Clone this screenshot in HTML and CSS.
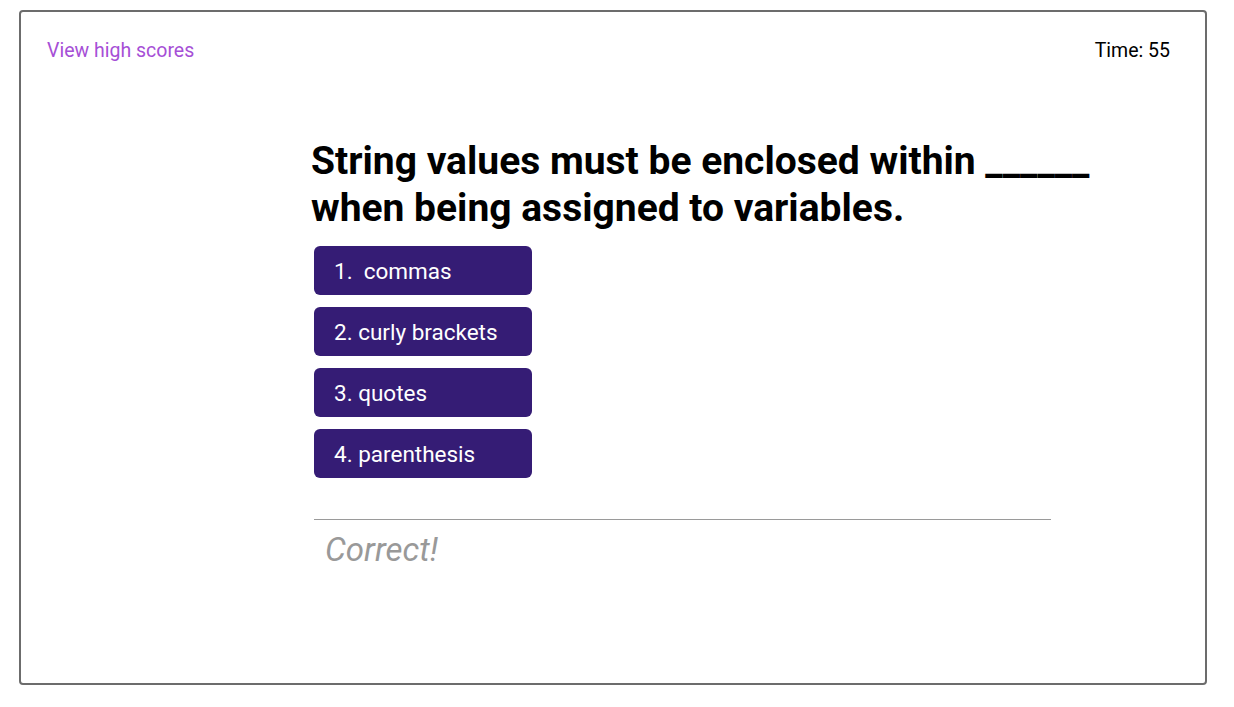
FILE: index.html
```html
<!DOCTYPE html>
<html lang="en">
<head>
<meta charset="utf-8">
<title>Code Quiz</title>
<link rel="stylesheet" href="styles.css">
</head>
<body>
<div class="frame">
  <header class="topbar">
    <a class="scores-link" href="#">View high scores</a>
    <div class="timer">Time: 55</div>
  </header>
  <main class="quiz">
    <h1 class="question">String values must be enclosed within ______ when being assigned to variables.</h1>
    <div class="choices">
      <button class="choice">1.&nbsp; commas</button>
      <button class="choice">2. curly brackets</button>
      <button class="choice">3. quotes</button>
      <button class="choice">4. parenthesis</button>
    </div>
    <div class="feedback">Correct!</div>
  </main>
</div>
</body>
</html>
```
FILE: styles.css
```css
html, body {
  margin: 0;
  padding: 0;
  background: #ffffff;
}
body {
  font-family: Roboto, "Liberation Sans", sans-serif;
  color: #000;
}
.frame {
  box-sizing: border-box;
  margin: 10px 0 0 19px;
  width: 1188px;
  height: 675px;
  border: 2px solid #6c6c6c;
  border-radius: 4px;
}
.topbar {
  display: flex;
  justify-content: space-between;
  align-items: flex-start;
  padding: 27px 35px 0 26px;
  font-size: 19.5px;
  line-height: 24px;
}
.scores-link {
  color: #a64fd6;
  text-decoration: none;
}
.timer {
  color: #000;
}
.quiz {
  padding: 0 0 0 290px;
}
.question {
  margin: 75px 0 0 0;
  width: 860px;
  font-size: 39px;
  font-weight: 700;
  line-height: 47px;
}
.choices {
  display: flex;
  flex-direction: column;
  align-items: flex-start;
  gap: 12px;
  margin: 14px 0 0 3px;
}
.choice {
  box-sizing: border-box;
  width: 218px;
  height: 49px;
  padding: 0 0 0 20px;
  border: none;
  border-radius: 6px;
  background: #351c75;
  color: #fff;
  font-family: Roboto, "Liberation Sans", sans-serif;
  font-size: 22.5px;
  text-align: left;
  cursor: pointer;
}
.feedback {
  box-sizing: border-box;
  margin: 41px 0 0 3px;
  width: 737px;
  border-top: 1.5px solid #9a9a9a;
  padding: 10px 0 0 11px;
  font-size: 33px;
  font-style: italic;
  color: #999999;
  line-height: 40px;
}
```
